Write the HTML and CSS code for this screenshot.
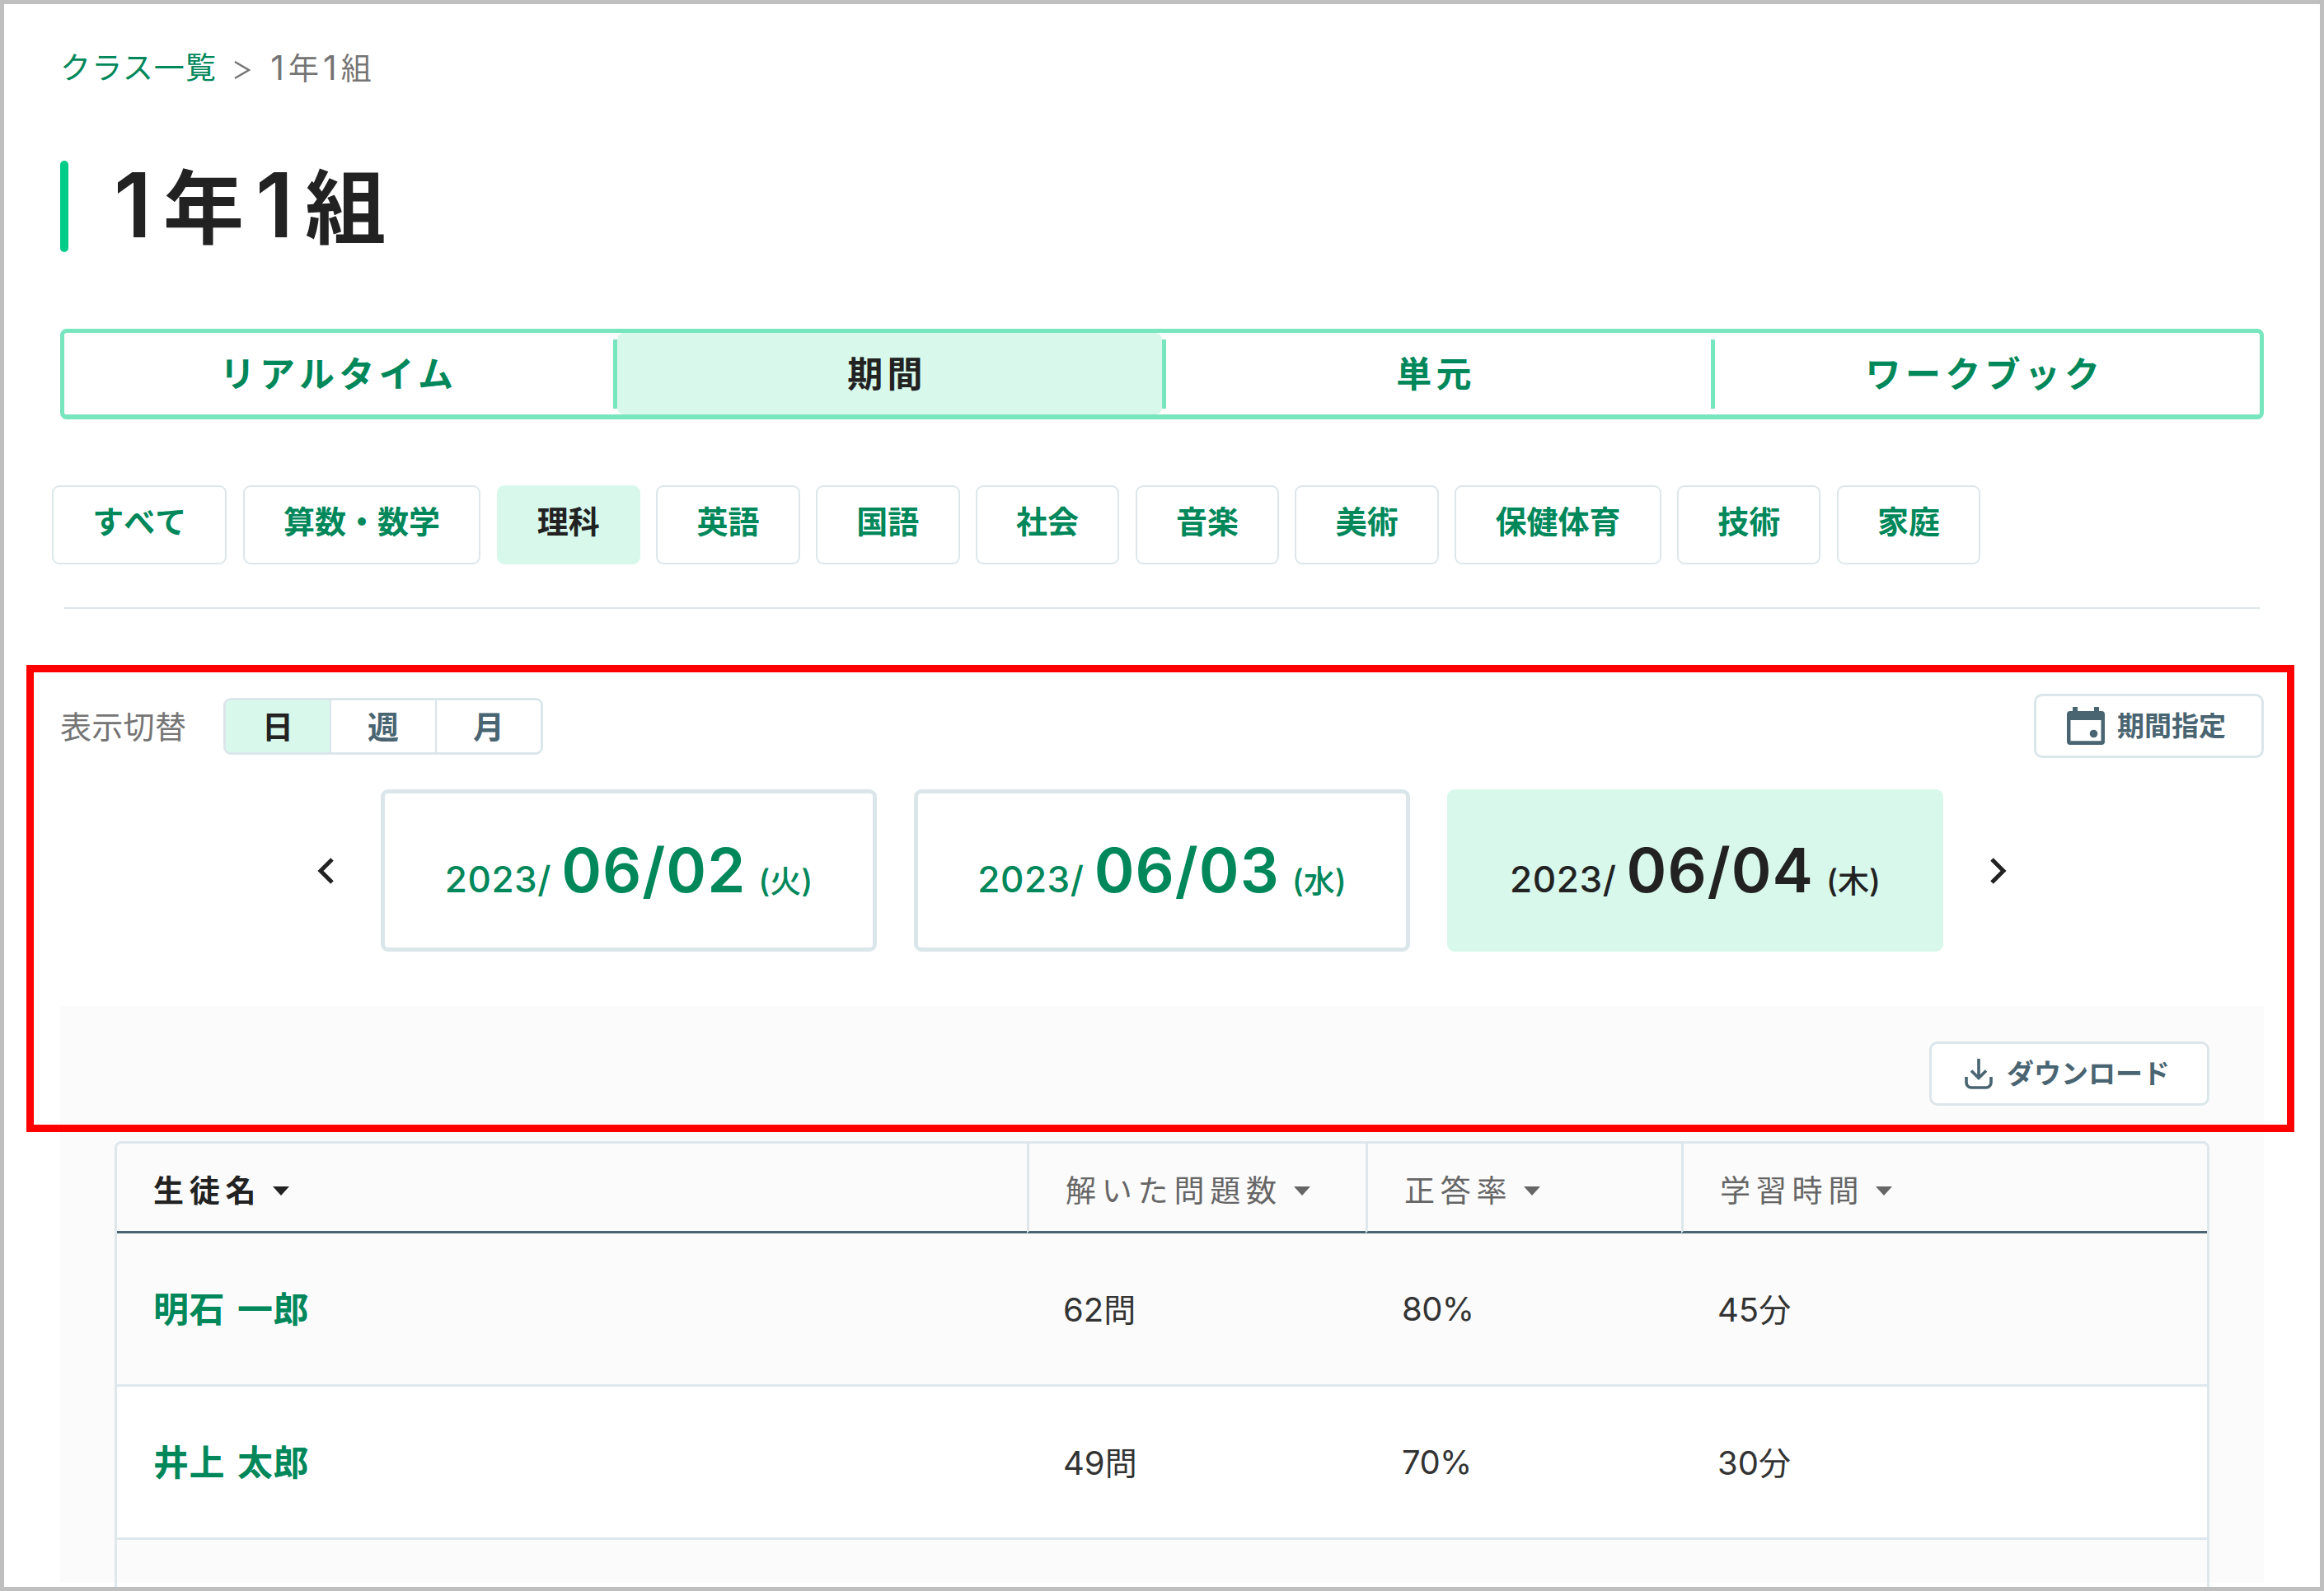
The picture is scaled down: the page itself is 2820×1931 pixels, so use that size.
FILE: index.html
```html
<!DOCTYPE html>
<html lang="ja">
<head>
    <meta charset="UTF-8">
    <meta name="viewport" content="width=device-width, initial-scale=1.0">
    <title>1年1組</title>
    <link rel="stylesheet" href="styles.css">
</head>
<body>
    <main class="page">
        <nav class="breadcrumb">
            <a class="breadcrumb-link">クラス一覧</a>
            <svg class="breadcrumb-sep" viewBox="0 0 20 24"><path d="M1 2 L18 12 L1 22"/></svg>
            <span class="breadcrumb-current"><i>1</i>年<i>1</i>組</span>
        </nav>

        <h1 class="title"><span><i>1</i>年<i>1</i>組</span></h1>

        <div class="tabs">
            <div class="tab"><span>リアルタイム</span></div>
            <div class="tab active"><span>期間</span></div>
            <div class="tab"><span>単元</span></div>
            <div class="tab"><span>ワークブック</span></div>
        </div>

        <div class="subjects">
            <button class="subject">すべて</button>
            <button class="subject">算数・数学</button>
            <button class="subject active">理科</button>
            <button class="subject">英語</button>
            <button class="subject">国語</button>
            <button class="subject">社会</button>
            <button class="subject">音楽</button>
            <button class="subject">美術</button>
            <button class="subject">保健体育</button>
            <button class="subject">技術</button>
            <button class="subject">家庭</button>
        </div>

        <hr class="line">

        <div class="toolbar">
            <span class="toolbar-label">表示切替</span>
            <div class="switch">
                <button class="switch-item active">日</button>
                <button class="switch-item">週</button>
                <button class="switch-item">月</button>
            </div>
            <button class="btn btn-period">
                <svg class="icon-calendar" viewBox="0 0 46 46">
                    <path fill-rule="evenodd" d="M7 0h6v5h20V0h6v5h3a4 4 0 0 1 4 4v33a4 4 0 0 1-4 4H4a4 4 0 0 1-4-4V9a4 4 0 0 1 4-4h3zM4.5 16v25.300h37V16z"/>
                    <circle cx="32.500" cy="32.500" r="4.800"/>
                </svg>
                <span>期間指定</span>
            </button>
        </div>

        <div class="dates">
            <svg class="arrow" viewBox="0 0 20 32"><path d="M18 2 L4 16 L18 30"/></svg>
            <div class="date"><span class="year">2023/</span><span class="day">06/02</span><span class="week">(火)</span></div>
            <div class="date"><span class="year">2023/</span><span class="day">06/03</span><span class="week">(水)</span></div>
            <div class="date active"><span class="year">2023/</span><span class="day">06/04</span><span class="week">(木)</span></div>
            <svg class="arrow" viewBox="0 0 20 32"><path d="M2 2 L16 16 L2 30"/></svg>
        </div>

        <section class="panel">
            <div class="panel-head">
                <button class="btn btn-download">
                    <svg class="icon-download" viewBox="0 0 34 37"><path d="M17 0v23M8 14.5l9 9 9-9M2 22v7a6 6 0 0 0 6 6h18a6 6 0 0 0 6-6v-7"/></svg>
                    <span>ダウンロード</span>
                </button>
            </div>
            <table class="students">
                <thead>
                    <tr>
                        <th class="col-name sorted">生徒名<span class="caret"></span></th>
                        <th class="col-count">解いた問題数<span class="caret"></span></th>
                        <th class="col-rate">正答率<span class="caret"></span></th>
                        <th>学習時間<span class="caret"></span></th>
                    </tr>
                </thead>
                <tbody>
                    <tr>
                        <td class="name">明石 一郎</td>
                        <td>62<small>問</small></td>
                        <td class="rate">80%</td>
                        <td>45<small>分</small></td>
                    </tr>
                    <tr>
                        <td class="name">井上 太郎</td>
                        <td>49<small>問</small></td>
                        <td class="rate">70%</td>
                        <td>30<small>分</small></td>
                    </tr>
                    <tr>
                        <td></td>
                        <td></td>
                        <td></td>
                        <td></td>
                    </tr>
                </tbody>
            </table>
        </section>

        <div class="highlight"></div>
    </main>
</body>
</html>
```
FILE: styles.css
```css
* {
    box-sizing: border-box;
}
body {
    margin: 0;
    font-family: Inter, "Noto Sans CJK JP", sans-serif;
    color: #222;
    background: #fff;
}
i {
    font-style: normal;
}
button {
    font-family: inherit;
    background: #fff;
    padding: 0;
    margin: 0;
}
.page {
    position: relative;
    width: 2820px;
    height: 1931px;
    padding: 47px 68px 0;
    border: 5px solid #bfbfbf;
    overflow: hidden;
}
.breadcrumb {
    display: flex;
    align-items: center;
    height: 60px;
    padding-top: 2px;
    font-size: 37px;
    line-height: 58px;
    color: #757575;
}
.breadcrumb-link {
    color: #00875a;
    letter-spacing: 1.2px;
}
.breadcrumb-sep {
    width: 20px;
    height: 24px;
    margin: 4px 24px 0 21px;
    fill: none;
    stroke: #757575;
    stroke-width: 2.6;
}
.breadcrumb-current {
    letter-spacing: 5px;
}
.breadcrumb-current i {
    font-size: 41px;
}
.title {
    display: flex;
    align-items: center;
    height: 111px;
    margin: 83px 0 0;
    font-size: 98px;
    line-height: 111px;
    font-weight: 700;
    letter-spacing: 14px;
}
.title::before {
    content: "";
    width: 10px;
    height: 111px;
    margin-right: 55px;
    border-radius: 5px;
    background: #00cc88;
}
.title i {
    font-size: 109px;
    font-weight: 600;
    line-height: 1;
}
.tabs {
    display: grid;
    grid-template-columns: repeat(4, 1fr);
    height: 110px;
    margin-top: 93px;
    border: 5px solid #77e5be;
    border-bottom-width: 6px;
    border-radius: 8px;
}
.tab {
    display: flex;
    align-items: center;
    font-size: 43px;
    font-weight: 700;
    line-height: 98px;
    letter-spacing: 5.3px;
    color: #00875a;
}
.tab + .tab::before {
    content: "";
    width: 5px;
    height: 84px;
    background: #77e5be;
}
.tab span {
    flex: 1;
    padding-top: 1px;
    text-align: center;
    border-radius: 8px;
}
.tab + .tab span {
    padding-right: 6px;
}
.tab.active span {
    background: #d8f8ec;
    color: #222;
}
.subjects {
    display: flex;
    gap: 19.4px;
    margin: 80px 0 0 -10px;
}
.subject {
    height: 96px;
    padding: 0 47.2px 13px;
    border: 2px solid #dde7eb;
    border-radius: 9px;
    font-size: 38px;
    font-weight: 700;
    font-kerning: none;
    color: #00875a;
}
.subject.active {
    background: #d8f8ec;
    border-color: #d8f8ec;
    color: #222;
}
.line {
    height: 2px;
    margin: 52px 5px 0;
    border: none;
    background: #dbe6ea;
}
.toolbar {
    display: flex;
    align-items: center;
    height: 78px;
    margin-top: 103px;
}
.toolbar-label {
    width: 198px;
    padding-bottom: 3px;
    font-size: 38px;
    letter-spacing: 0.3px;
    color: #757575;
}
.switch {
    display: flex;
    width: 388px;
    height: 69px;
    border: 3px solid #dbe6ea;
    border-radius: 9px;
    overflow: hidden;
}
.switch-item {
    flex: 1;
    padding-bottom: 3px;
    border: none;
    font-size: 38px;
    font-weight: 700;
    color: #4a6572;
}
.switch-item + .switch-item {
    border-left: 2px solid #dbe6ea;
}
.switch-item.active {
    background: #d8f8ec;
    color: #222;
}
.btn {
    display: flex;
    align-items: center;
    height: 78px;
    border: 3px solid #dbe6ea;
    border-radius: 10px;
    font-size: 33px;
    font-weight: 700;
    color: #4a6572;
}
.btn span {
    padding-bottom: 4px;
}
.btn-period {
    width: 279px;
    margin-left: auto;
    padding-left: 37px;
}
.icon-calendar {
    width: 46px;
    height: 46px;
    margin-right: 15px;
    fill: #4a6572;
}
.dates {
    display: flex;
    justify-content: center;
    align-items: center;
    gap: 45px;
    margin-top: 38px;
}
.arrow {
    width: 20px;
    height: 32px;
    margin: 0 12px;
    fill: none;
    stroke: #222;
    stroke-width: 5;
}
.date {
    display: flex;
    justify-content: center;
    align-items: baseline;
    width: 602px;
    height: 197px;
    padding-top: 48px;
    border: 5px solid #dbe6ea;
    border-radius: 9px;
    color: #00875a;
}
.date.active {
    background: #d8f8ec;
    border-color: #d8f8ec;
    color: #222;
}
.year {
    font-size: 44px;
    font-weight: 500;
    letter-spacing: 0.6px;
}
.day {
    margin: 0 15px 0 12px;
    font-size: 74px;
    font-weight: 600;
    letter-spacing: 1px;
}
.week {
    font-size: 38px;
    font-weight: 500;
}
.panel {
    height: 700px;
    margin-top: 66px;
    padding: 43px 66px 0;
    background: #fbfbfb;
}
.panel-head {
    display: flex;
    justify-content: flex-end;
    margin-bottom: 43px;
}
.btn-download {
    width: 340px;
    padding-left: 40px;
}
.icon-download {
    width: 34px;
    height: 37px;
    margin-right: 17px;
    fill: none;
    stroke: #4a6572;
    stroke-width: 3.6;
}
.students {
    width: 100%;
    table-layout: fixed;
    border: 3px solid #dde7ec;
    border-radius: 8px 8px 0 0;
    border-collapse: separate;
    border-spacing: 0;
}
.students th {
    height: 109px;
    padding: 3px 0 0 44px;
    border-bottom: 3px solid #4a6572;
    font-size: 37px;
    font-weight: 400;
    letter-spacing: 6.8px;
    text-align: left;
    color: #666;
}
.students th + th {
    border-left: 3px solid #dde7ec;
}
.students th.sorted {
    font-weight: 600;
    color: #222;
}
.col-name {
    width: 1104px;
}
.col-count {
    width: 411px;
}
.col-rate {
    width: 383px;
}
.caret {
    display: inline-block;
    margin-left: 14px;
    vertical-align: 8px;
    border: 10px solid transparent;
    border-top: 11px solid currentColor;
    border-bottom: none;
}
.students td {
    height: 186px;
    padding: 0 0 4px 44px;
    border-bottom: 3px solid #dde7ec;
    font-size: 40px;
    color: #333;
}
.students td.rate {
    padding-bottom: 0;
    letter-spacing: -0.6px;
}
.students small {
    font-size: 39px;
}
.students tbody tr:nth-child(even) {
    background: #fff;
}
.students td.name {
    padding-bottom: 5px;
    font-size: 43px;
    font-weight: 600;
    letter-spacing: 0.4px;
    word-spacing: 4px;
    color: #00875a;
}
/* 強調枠 */
.highlight {
    position: absolute;
    left: 27px;
    top: 802px;
    width: 2752px;
    height: 567px;
    border: 9px solid #f00;
}
```
